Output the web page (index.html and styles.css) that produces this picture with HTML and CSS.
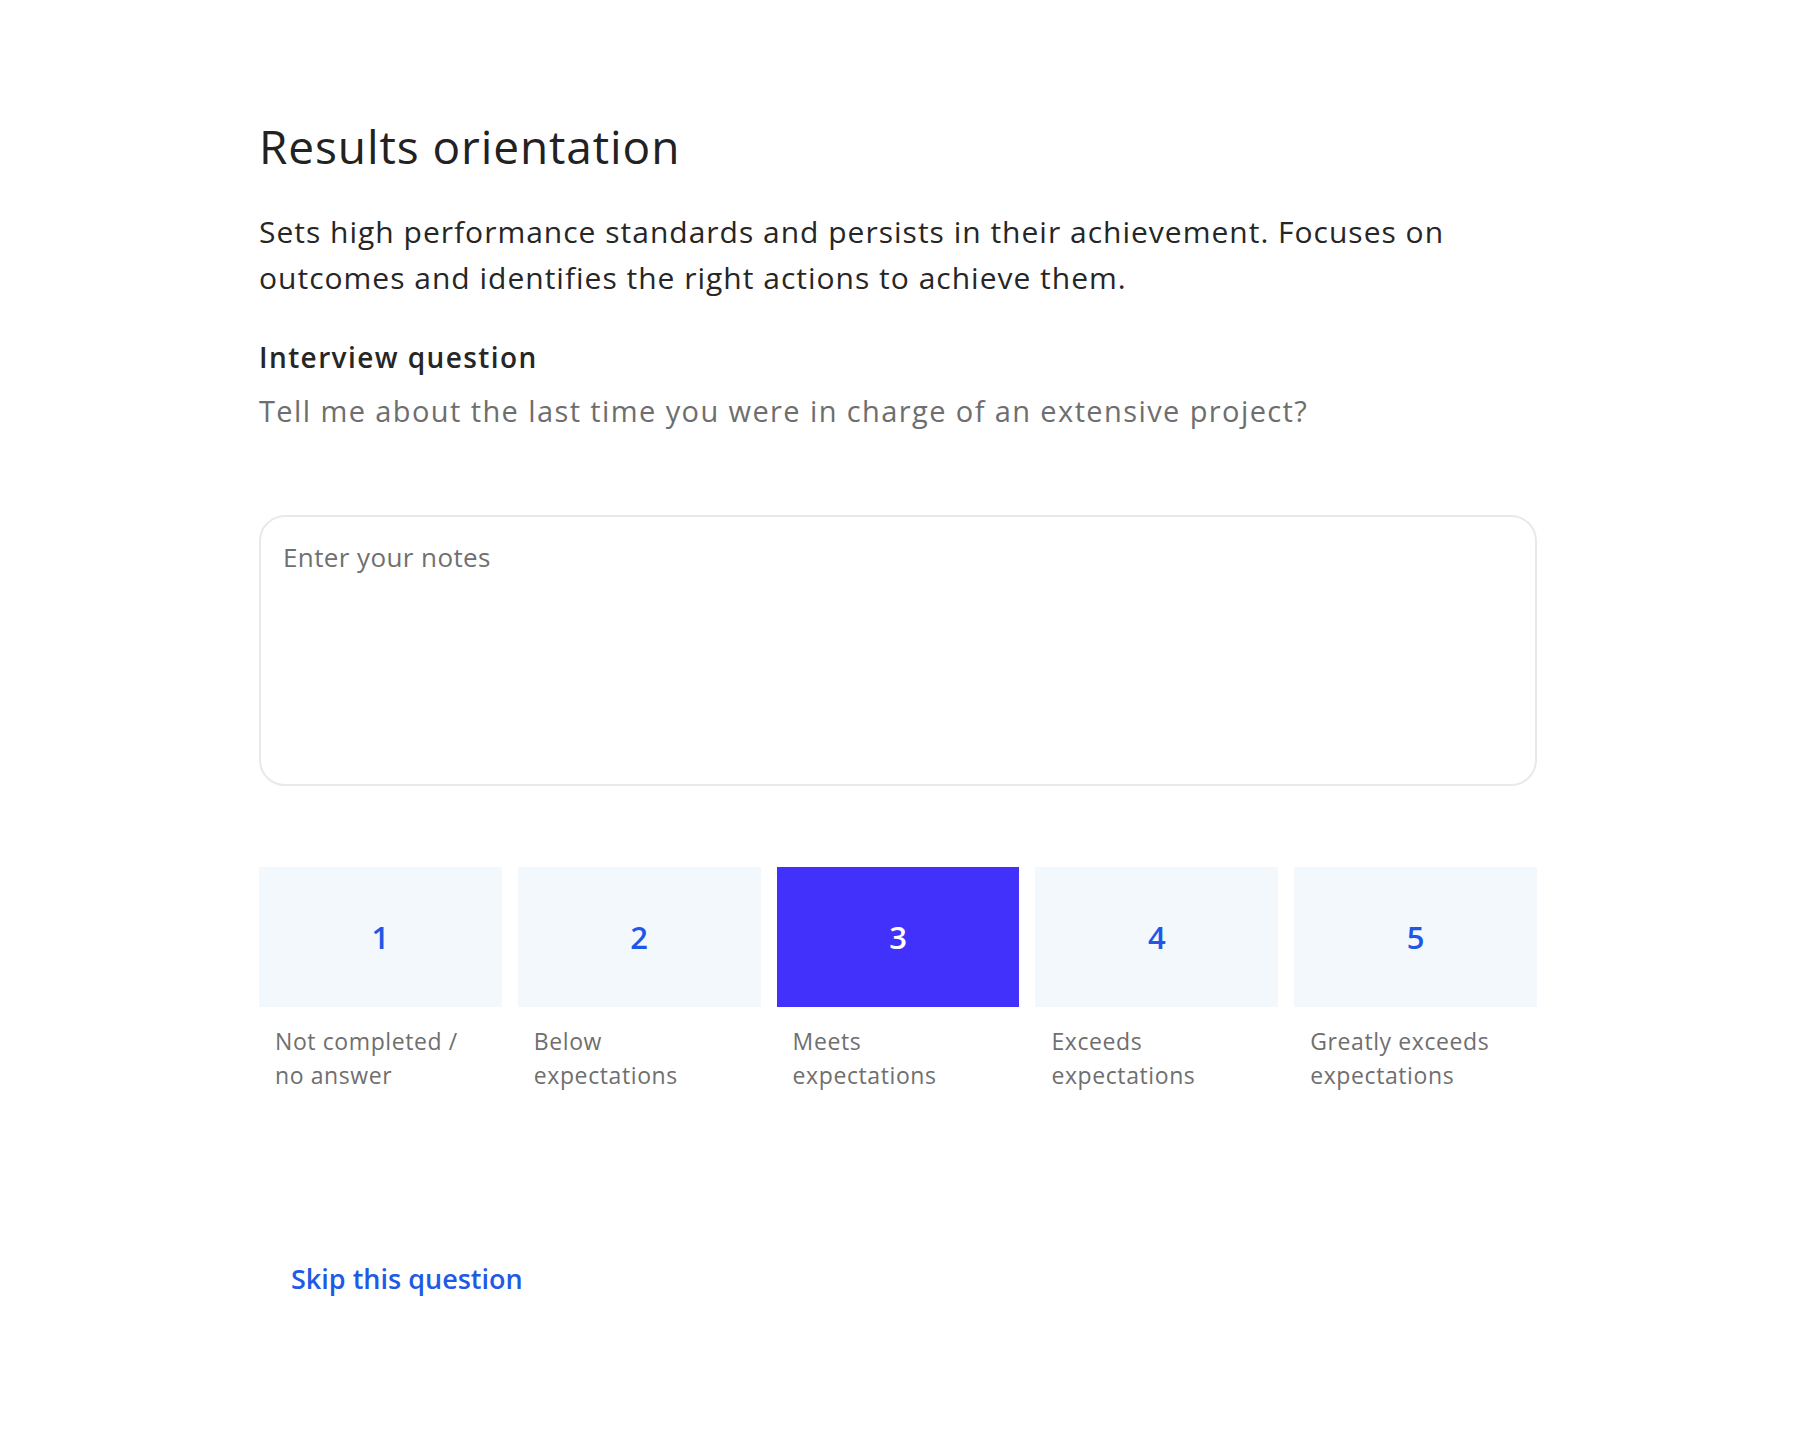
FILE: index.html
```html
<!DOCTYPE html>
<html lang="en">
<head>
  <meta charset="UTF-8" />
  <title>Results orientation</title>
  <link rel="stylesheet" href="styles.css">
</head>
<body>
  <main class="card">
    <h1 class="title">Results orientation</h1>
    <p class="desc">Sets high performance standards and persists in their achievement. Focuses on outcomes and identifies the right actions to achieve them.</p>

    <h2 class="q-label">Interview question</h2>
    <p class="q-text">Tell me about the last time you were in charge of an extensive project?</p>

    <textarea class="notes" placeholder="Enter your notes"></textarea>

    <div class="rating">
      <div class="rate">
        <button class="rate-box">1</button>
        <span class="rate-label">Not completed /<br>no answer</span>
      </div>
      <div class="rate">
        <button class="rate-box">2</button>
        <span class="rate-label">Below<br>expectations</span>
      </div>
      <div class="rate">
        <button class="rate-box selected">3</button>
        <span class="rate-label">Meets<br>expectations</span>
      </div>
      <div class="rate">
        <button class="rate-box">4</button>
        <span class="rate-label">Exceeds<br>expectations</span>
      </div>
      <div class="rate">
        <button class="rate-box">5</button>
        <span class="rate-label">Greatly exceeds<br>expectations</span>
      </div>
    </div>

    <button class="skip">Skip this question</button>
  </main>
</body>
</html>
```

FILE: styles.css
```css
body {
  margin: 0;
  background: #fff;
  font-family: "Open Sans", "Noto Sans", sans-serif;
  color: #222;
}

.card {
  width: 1278px;
  margin-left: 259px;
  padding-top: 120px;
}

.title {
  margin: 0;
  font-size: 46px;
  line-height: 53px;
  font-weight: 400;
  letter-spacing: 0.9px;
  color: #222;
}

.desc {
  margin: 36px 0 0;
  font-size: 30px;
  line-height: 46px;
  letter-spacing: 1px;
  color: #262626;
  max-width: 1220px;
}

.q-label {
  margin: 39px 0 0;
  font-size: 28px;
  line-height: 34px;
  font-weight: 600;
  letter-spacing: 1.4px;
  color: #262626;
}

.q-text {
  margin: 17px 0 0;
  font-size: 29px;
  line-height: 40px;
  letter-spacing: 1.4px;
  color: #6e6e6e;
}

.notes {
  display: block;
  box-sizing: border-box;
  width: 100%;
  height: 271px;
  margin-top: 84px;
  padding: 22px 22px;
  border: 2px solid #e9e9e9;
  border-radius: 26px;
  resize: none;
  font-family: inherit;
  font-size: 26px;
  line-height: 36px;
  letter-spacing: 0.4px;
  color: #333;
  outline: none;
}

.notes::placeholder {
  color: #707070;
}

.rating {
  display: grid;
  grid-template-columns: repeat(5, 1fr);
  gap: 16px;
  margin-top: 81px;
}

.rate {
  display: flex;
  flex-direction: column;
}

.rate-box {
  height: 140px;
  border: none;
  background: #f3f8fd;
  font-family: inherit;
  font-size: 31px;
  font-weight: 600;
  color: #2256e6;
  cursor: pointer;
}

.rate-box.selected {
  background: #4231fb;
  color: #fff;
}

.rate-label {
  margin-top: 17px;
  padding: 0 16px;
  font-size: 23px;
  line-height: 34px;
  letter-spacing: 0.6px;
  color: #6f6f6f;
}

.skip {
  display: block;
  margin-top: 169px;
  padding: 0 32px;
  border: none;
  background: none;
  font-family: inherit;
  font-size: 27px;
  line-height: 36px;
  font-weight: 600;
  color: #1f5ae6;
  cursor: pointer;
}
```
